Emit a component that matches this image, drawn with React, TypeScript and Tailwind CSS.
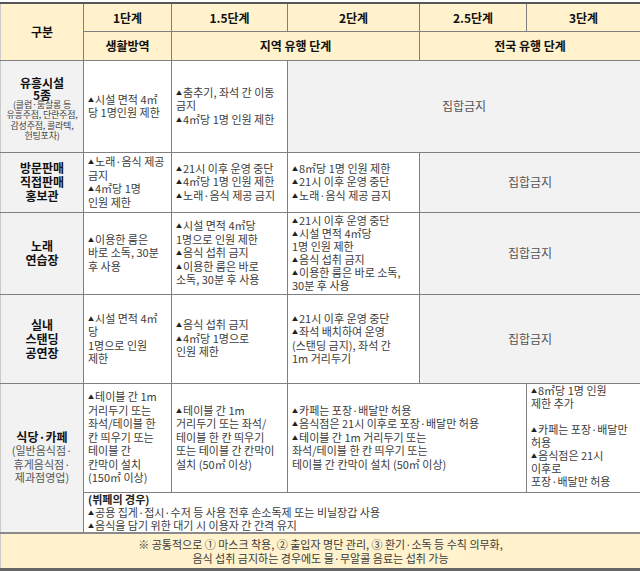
import React from "react";

const Tri = () => (
  <span className="inline-block text-[6px] leading-none align-[2px] mr-[1px] text-[#222]">▲</span>
);

function Lines({ lines, lh = "13.5" }: { lines: string[]; lh?: "13.5" | "13" }) {
  const row = lh === "13" ? "h-[13px] leading-[13px]" : "h-[13.5px] leading-[13.5px]";
  return (
    <div className="whitespace-nowrap">
      {lines.map((l, i) => (
        <div key={i} className={row}>
          {l.startsWith("^") ? (
            <>
              <Tri />
              {l.slice(1)}
            </>
          ) : (
            l
          )}
        </div>
      ))}
    </div>
  );
}

const base0 = "border border-[#808080] text-[11px] leading-[13.5px] text-[#3c3c3c]";
const base = base0 + " align-middle p-0";
const cellTop = base0 + " align-top px-[4px] py-0 bg-white text-left";
const cell = base + " px-[4px] bg-white text-left";
const head = base + " bg-[#fff2cc] text-center font-bold text-[12px] text-[#111]";
const catTop =
  base0 + " align-top px-0 pb-0 bg-[#f2f2f2] text-center font-bold text-[12px] leading-[14px] text-[#111]";
const cat =
  base + " bg-[#f2f2f2] text-center font-bold text-[12px] leading-[14px] text-[#111]";
const closed = base + " bg-[#f2f2f2] text-center text-[12px] text-[#555]";

export default function App() {
  return (
    <div
      className="w-[640px] h-[571px] bg-white pt-[2px] overflow-hidden"
      style={{ fontFamily: '"Noto Sans CJK KR", "Noto Sans", sans-serif' }}
    >
      <table className="w-[640px] table-fixed border-collapse">
        <colgroup>
          <col className="w-[83px]" />
          <col className="w-[88px]" />
          <col className="w-[116px]" />
          <col className="w-[132px]" />
          <col className="w-[107px]" />
          <col className="w-[114px]" />
        </colgroup>
        <tbody>
          <tr className="h-[28px]">
            <td rowSpan={2} className={head + " border-t-2 border-t-[#555] border-l-[#ccc]"}>
              구분
            </td>
            <td className={head + " border-t-2 border-t-[#555]"}>1단계</td>
            <td className={head + " border-t-2 border-t-[#555]"}>1.5단계</td>
            <td className={head + " border-t-2 border-t-[#555]"}>2단계</td>
            <td className={head + " border-t-2 border-t-[#555]"}>2.5단계</td>
            <td className={head + " border-t-2 border-t-[#555] border-r-[#ccc]"}>3단계</td>
          </tr>
          <tr className="h-[29px]">
            <td className={head}>생활방역</td>
            <td colSpan={2} className={head}>
              지역 유행 단계
            </td>
            <td colSpan={2} className={head + " border-r-[#ccc]"}>
              전국 유행 단계
            </td>
          </tr>

          <tr className="h-[92px]">
            <td className={catTop + " border-l-[#ccc] pt-[16px]"}>
              <div className="h-[12px] leading-[12px]">유흥시설</div>
              <div className="h-[11px] leading-[11px]">5종</div>
              <div className="font-normal text-[9px] leading-[10.5px] text-[#444] tracking-[-0.2px] whitespace-nowrap">
                <div>(클럽·룸살롱 등</div>
                <div>유흥주점, 단란주점,</div>
                <div>감성주점, 콜라텍,</div>
                <div>헌팅포차)</div>
              </div>
            </td>
            <td className={cell}>
              <Lines lines={["^시설 면적 4㎡", "당 1명인원 제한"]} />
            </td>
            <td className={cell}>
              <Lines lines={["^춤추기, 좌석 간 이동", "금지", "^4㎡당 1명 인원 제한"]} />
            </td>
            <td colSpan={3} className={closed + " border-r-[#ccc]"}>
              집합금지
            </td>
          </tr>

          <tr className="h-[60px]">
            <td className={cat + " border-l-[#ccc]"}>
              <div>방문판매</div>
              <div>직접판매</div>
              <div>홍보관</div>
            </td>
            <td className={cell}>
              <Lines lines={["^노래·음식 제공", "금지", "^4㎡당 1명", "인원 제한"]} />
            </td>
            <td className={cell}>
              <Lines
                lines={["^21시 이후 운영 중단", "^4㎡당 1명 인원 제한", "^노래·음식 제공 금지"]}
              />
            </td>
            <td className={cell}>
              <Lines
                lines={["^8㎡당 1명 인원 제한", "^21시 이후 운영 중단", "^노래·음식 제공 금지"]}
              />
            </td>
            <td colSpan={2} className={closed + " border-r-[#ccc]"}>
              집합금지
            </td>
          </tr>

          <tr className="h-[82px]">
            <td className={cat + " border-l-[#ccc]"}>
              <div>노래</div>
              <div>연습장</div>
            </td>
            <td className={cell}>
              <Lines lines={["^이용한 룸은", "바로 소독, 30분", "후 사용"]} />
            </td>
            <td className={cell}>
              <Lines
                lines={[
                  "^시설 면적 4㎡당",
                  "1명으로 인원 제한",
                  "^음식 섭취 금지",
                  "^이용한 룸은 바로",
                  "소독, 30분 후 사용",
                ]}
              />
            </td>
            <td className={cell}>
              <Lines
                lh="13"
                lines={[
                  "^21시 이후 운영 중단",
                  "^시설 면적 4㎡당",
                  " 1명 인원 제한",
                  "^음식 섭취 금지",
                  "^이용한 룸은 바로 소독,",
                  "30분 후 사용",
                ]}
              />
            </td>
            <td colSpan={2} className={closed + " border-r-[#ccc]"}>
              집합금지
            </td>
          </tr>

          <tr className="h-[89px]">
            <td className={cat + " border-l-[#ccc]"}>
              <div>실내</div>
              <div>스탠딩</div>
              <div>공연장</div>
            </td>
            <td className={cell}>
              <Lines lines={["^시설 면적 4㎡", "당", "1명으로 인원", "제한"]} />
            </td>
            <td className={cell}>
              <Lines lines={["^음식 섭취 금지", "^4㎡당 1명으로", " 인원 제한"]} />
            </td>
            <td className={cell}>
              <Lines
                lines={[
                  "^21시 이후 운영 중단",
                  "^좌석 배치하여 운영",
                  "(스탠딩 금지), 좌석 간",
                  "1m 거리두기",
                ]}
              />
            </td>
            <td colSpan={2} className={closed + " border-r-[#ccc]"}>
              집합금지
            </td>
          </tr>

          <tr className="h-[109px]">
            <td rowSpan={2} className={cat + " border-l-[#ccc]"}>
              <div>식당·카페</div>
              <div className="font-normal text-[11px] leading-[13.5px] text-[#555]">
                <div>(일반음식점·</div>
                <div>휴게음식점·</div>
                <div>제과점영업)</div>
              </div>
            </td>
            <td className={cell}>
              <Lines
                lines={[
                  "^테이블 간 1m",
                  "거리두기 또는",
                  "좌석/테이블 한",
                  "칸 띄우기 또는",
                  "테이블 간",
                  "칸막이 설치",
                  "(150㎡ 이상)",
                ]}
              />
            </td>
            <td className={cell}>
              <Lines
                lines={[
                  "^테이블 간 1m",
                  "거리두기 또는 좌석/",
                  "테이블 한 칸 띄우기",
                  "또는 테이블 간 칸막이",
                  "설치  (50㎡ 이상)",
                ]}
              />
            </td>
            <td colSpan={2} className={cell}>
              <Lines
                lines={[
                  "^카페는 포장·배달만 허용",
                  "^음식점은 21시 이후로 포장·배달만 허용",
                  "^테이블 간 1m 거리두기 또는",
                  " 좌석/테이블 한 칸 띄우기 또는",
                  " 테이블 간 칸막이 설치  (50㎡ 이상)",
                ]}
              />
            </td>
            <td className={cellTop + " border-r-[#ccc]"}>
              <Lines
                lh="13"
                lines={[
                  "^8㎡당 1명 인원",
                  " 제한 추가",
                  "",
                  "^카페는 포장·배달만",
                  "허용",
                  "^음식점은 21시",
                  "이후로",
                  "포장·배달만 허용",
                ]}
              />
            </td>
          </tr>

          <tr className="h-[40px]">
            <td colSpan={5} className={cell + " border-r-[#ccc]"}>
              <div className="font-bold text-[#222] h-[13px] leading-[13px]">(뷔페의 경우)</div>
              <Lines
                lh="13"
                lines={[
                  "^공용 집게·접시·수저 등 사용 전후 손소독제 또는 비닐장갑 사용",
                  "^음식을 담기 위한 대기 시 이용자 간 간격 유지",
                ]}
              />
            </td>
          </tr>

          <tr className="h-[37px]">
            <td
              colSpan={6}
              className={
                base +
                " bg-[#fff2cc] text-center leading-[14px] border-t-2 border-t-[#8a8a8a] border-l-[#ccc] border-r-[#ccc] border-b-[3px] border-b-[#666]"
              }
            >
              <div>※ 공통적으로 ① 마스크 착용, ② 출입자 명단 관리, ③ 환기·소독 등 수칙 의무화,</div>
              <div>음식 섭취 금지하는 경우에도 물·무알콜 음료는 섭취 가능</div>
            </td>
          </tr>
        </tbody>
      </table>
    </div>
  );
}
